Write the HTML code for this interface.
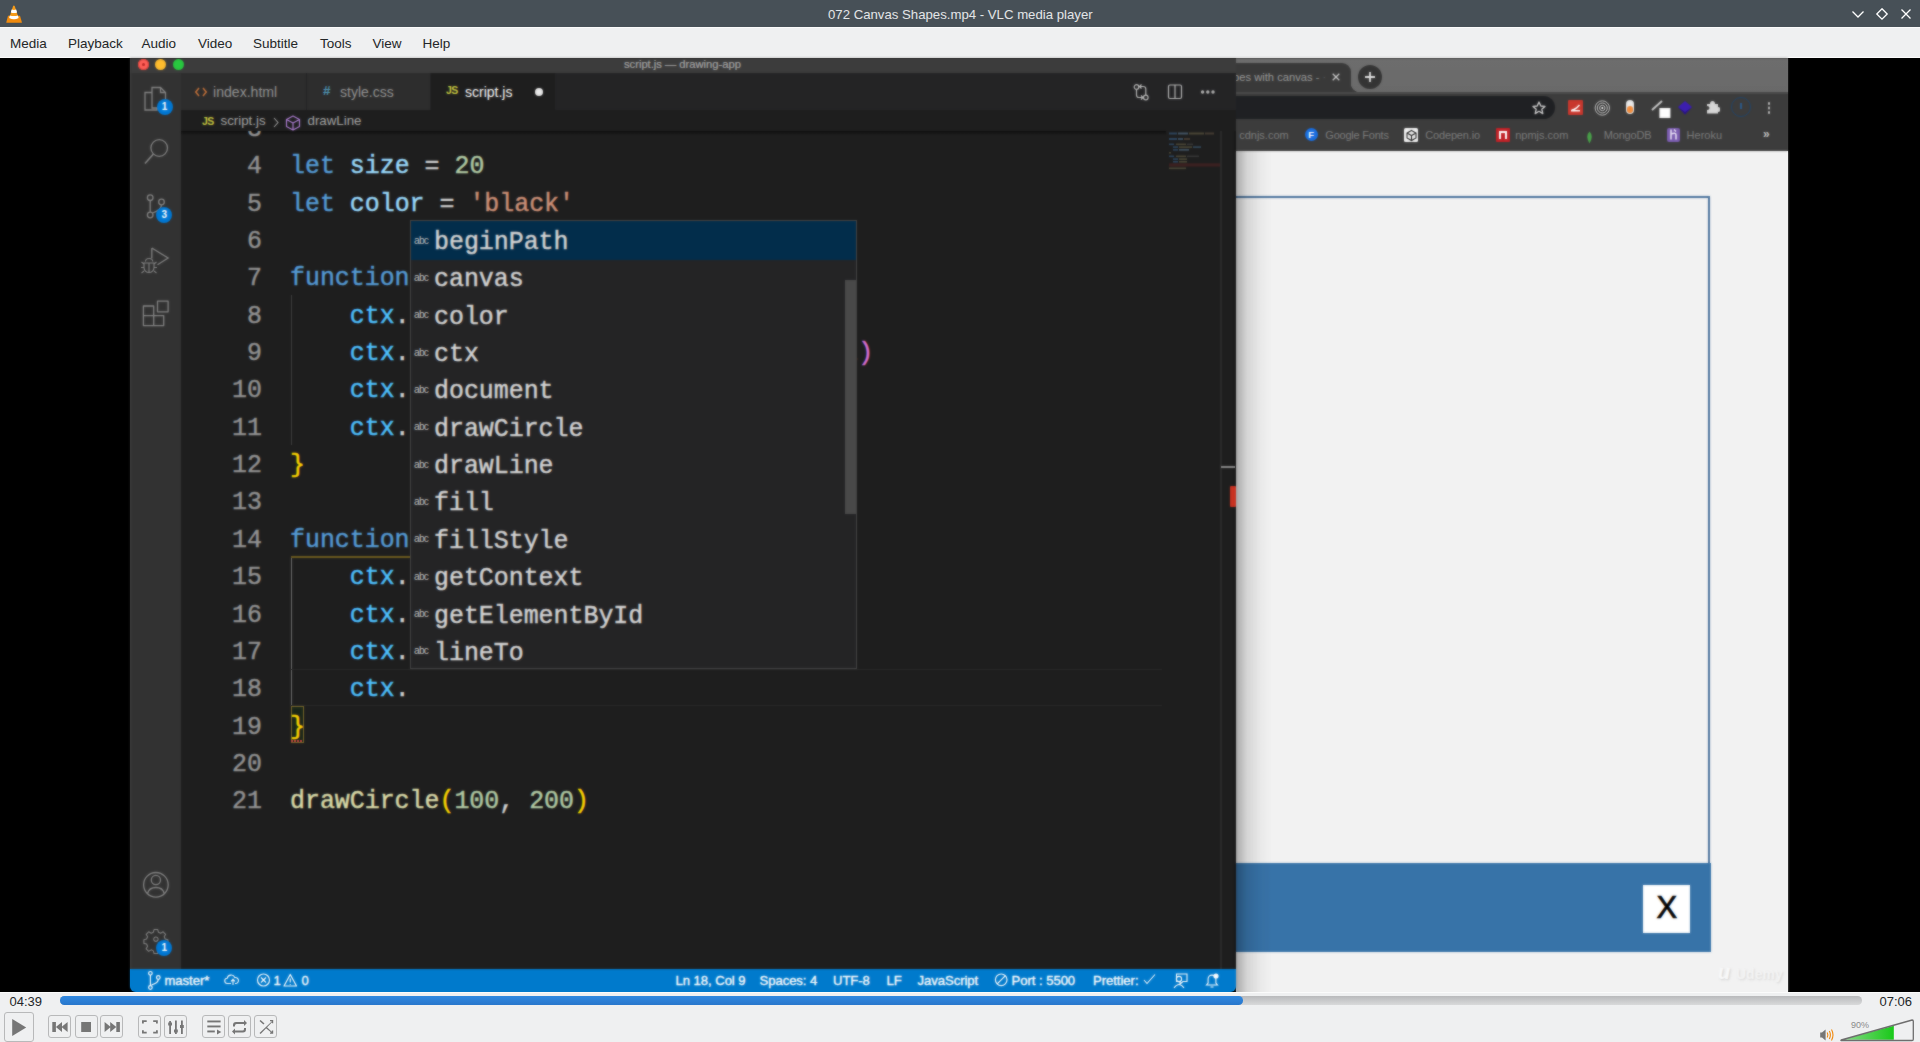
<!DOCTYPE html>
<html><head><meta charset="utf-8">
<style>
*{box-sizing:border-box;margin:0;padding:0}
html,body{width:1920px;height:1042px;overflow:hidden;background:#000;font-family:"Liberation Sans",sans-serif}
.a{position:absolute}
.t{position:absolute;white-space:pre;line-height:1}
#title{left:0;top:0;width:1920px;height:27px;background:#475057}
#tline{left:0;top:27px;width:1920px;height:1px;background:#fafafa}
#menu{left:0;top:28px;width:1920px;height:29px;background:#eff0f1}
#mline{left:0;top:57px;width:1920px;height:1px;background:#fcfcfc}
.mi{font-size:13.5px;color:#232627;top:37px}
/* vscode */
.mono{font-family:"Liberation Mono",monospace}
.code{position:absolute;left:290px;font-family:"Liberation Mono",monospace;font-size:24.92px;white-space:pre;line-height:37.35px;height:37.35px;color:#d4d4d4;transform-origin:0 28px;transform:translateY(2.7px) scaleY(1.02);-webkit-text-stroke:.45px}
.ln{position:absolute;left:190px;width:72px;text-align:right;font-family:"Liberation Mono",monospace;font-size:24.92px;white-space:pre;line-height:37.35px;height:37.35px;color:#939393;transform-origin:0 28px;transform:translateY(2.7px) scaleY(1.02);-webkit-text-stroke:.45px}
.kw{color:#569cd6}.vr{color:#9cdcfe}.cn{color:#4fc1ff}.nm{color:#b5cea8}.st{color:#ce9178}.fn{color:#dcdcaa}.b1{color:#ffd700}.b2{color:#da70d6}.b3{color:#179fff}
.sg{position:absolute;left:0;width:445px;height:37.35px}
.sgt{position:absolute;left:23px;top:0;font-family:"Liberation Mono",monospace;font-size:24.92px;white-space:pre;line-height:37.35px;color:#d4d4d4;transform-origin:0 28px;transform:translateY(2.7px) scaleY(1.02);-webkit-text-stroke:.45px}
.abc{position:absolute;left:3px;top:14.5px;font-size:10.2px;color:#c0c0c0;letter-spacing:-0.75px;line-height:1}
.ctl{position:absolute;top:1015px;width:23px;height:23px;border:1px solid #b8b9ba;border-radius:3px;background:#eff0f1}
</style></head><body>

<!-- VLC title bar -->
<div class="a" id="title">
  <svg class="a" style="left:0;top:0" width="28" height="27" viewBox="0 0 28 27">
    <path d="M8 15.8 L20 15.8 L21.9 22.2 Q22 22.7 21.4 22.7 L6.8 22.7 Q6.2 22.7 6.3 22.2 Z" fill="#f08a0e"/>
    <path d="M13.1 5.9 Q13.9 5.1 14.7 5.9 L18.7 18.2 Q14 20.6 9.1 18.2 Z" fill="#f59a18"/>
    <path d="M11.6 9.5 Q14 10.4 16.2 9.5 L17.1 12.4 Q14 13.4 10.8 12.4 Z" fill="#fdfdfd"/>
    <path d="M9.8 15.5 Q14 16.7 18 15.5 L18.6 17.9 Q14 20.6 9.2 17.9 Z" fill="#fdfdfd"/>
  </svg>
  <div class="t" style="left:828px;top:8px;font-size:13.2px;color:#e3e5e7">072 Canvas Shapes.mp4 - VLC media player</div>
  <svg class="a" style="left:1850px;top:8px" width="66" height="13" viewBox="0 0 66 13">
    <path d="M2.5 3.5 L8 9 L13.5 3.5" stroke="#fff" stroke-width="1.3" fill="none"/>
    <path d="M32 0.8 L37.2 6 L32 11.2 L26.8 6 Z" stroke="#fff" stroke-width="1.3" fill="none"/>
    <path d="M51.5 1.5 L60.5 10.5 M60.5 1.5 L51.5 10.5" stroke="#fff" stroke-width="1.3" fill="none"/>
  </svg>
</div>
<div class="a" id="tline"></div>
<div class="a" id="menu">
  <div class="t mi" style="left:10px;top:9px">Media</div>
  <div class="t mi" style="left:68px;top:9px">Playback</div>
  <div class="t mi" style="left:141.5px;top:9px">Audio</div>
  <div class="t mi" style="left:198px;top:9px">Video</div>
  <div class="t mi" style="left:253px;top:9px">Subtitle</div>
  <div class="t mi" style="left:320px;top:9px">Tools</div>
  <div class="t mi" style="left:372.5px;top:9px">View</div>
  <div class="t mi" style="left:422.5px;top:9px">Help</div>
</div>
<div class="a" id="mline"></div>

<!-- VIDEO -->
<div class="a" id="video" style="left:0;top:58px;width:1920px;height:934px;background:#000">
</div>

<div class="a" id="vframe" style="left:0;top:0;width:1920px;height:1042px">
<!--VSCODE-->
<div class="a" id="vsc" style="left:130px;top:58px;width:1106px;height:934px;background:#1e1e1e;border-radius:0 0 8px 8px;overflow:hidden">
</div>
<!-- title bar -->
<div class="a" style="left:130px;top:58px;width:1106px;height:15px;background:#3c3c3c"></div>
<div class="a" style="left:137.5px;top:59px;width:11px;height:11px;border-radius:50%;background:#fe5f57;box-shadow:inset 0 0 0 1px #e0443e"></div>
<div class="a" style="left:141.5px;top:63px;width:3px;height:3px;border-radius:50%;background:#9a0f0f;opacity:.7"></div>
<div class="a" style="left:155px;top:59px;width:11px;height:11px;border-radius:50%;background:#febc2e"></div>
<div class="a" style="left:172.5px;top:59px;width:11px;height:11px;border-radius:50%;background:#28c840"></div>
<div class="t" style="left:624px;top:59px;font-size:11.2px;color:#a8a8a8;-webkit-text-stroke:.2px #a8a8a8">script.js — drawing-app</div>
<!-- activity bar -->
<div class="a" style="left:130px;top:73px;width:50.5px;height:896px;background:#333333"></div>
<div class="a" style="left:130px;top:58px;width:2px;height:911px;background:#3a3a3a;opacity:.6"></div>
<svg class="a" style="left:130px;top:73px" width="51" height="896" viewBox="0 0 51 896" fill="none" stroke="#858585" stroke-width="1.3">
  <!-- explorer -->
  <path d="M22 14.5 h8.5 l5 5 v15.5 h-13.5 z M30.5 14.5 v5 h5"/>
  <path d="M22 19.5 h-7 v17.5 h12 v-2"/>
  <!-- search -->
  <circle cx="29.2" cy="75" r="8.3"/>
  <path d="M23.4 81 L15 90.5" stroke-width="1.6"/>
  <!-- scm -->
  <circle cx="20.2" cy="124.7" r="2.8"/>
  <circle cx="31.5" cy="129" r="2.8"/>
  <circle cx="20.2" cy="142" r="2.8"/>
  <path d="M20.2 127.5 V139.2 M31.5 131.8 Q31.5 137 22.5 140"/>
  <!-- debug -->
  <path d="M21.8 175 V185.5 M21.8 175 L38.1 185 L27.5 191.8"/>
  <path d="M15.5 188.5 a3.6 3 0 0 1 7.2 0 M14 190 h10 v4.5 a5 5 0 0 1 -10 0 z M19 190 v9 M11.5 189 l2.5 2 M26.5 189 l-2.5 2 M11 194.5 h3 M24 194.5 h3 M11.5 200 l2.5 -2 M26.5 200 l-2.5 -2" stroke-width="1.1"/>
  <!-- extensions -->
  <path d="M13.4 233 h10.3 v19.6 h-10.3 z M13.4 242.6 h20.3 v10 h-10 M27.5 228.2 h10.6 v10.6 h-10.6 z" stroke-linejoin="round"/>
  <!-- account -->
  <circle cx="25.9" cy="811.8" r="12.3"/>
  <circle cx="25.9" cy="807" r="4.6"/>
  <path d="M17.5 820.5 Q19 814.5 25.9 814.5 Q32.8 814.5 34.3 820.5"/>
  <!-- gear -->
  <g transform="translate(25.9 866.2) scale(0.84)">
    <circle r="2.6"/>
    <path d="M-2.2 -11.5 h4.4 l0.8 3.2 l2.6 1.2 l3 -1.7 l3 3 l-1.7 3 l1.2 2.6 l3.2 0.8 v4.4 l-3.2 0.8 l-1.2 2.6 l1.7 3 l-3 3 l-3 -1.7 l-2.6 1.2 l-0.8 3.2 h-4.4 l-0.8 -3.2 l-2.6 -1.2 l-3 1.7 l-3 -3 l1.7 -3 l-1.2 -2.6 l-3.2 -0.8 v-4.4 l3.2 -0.8 l1.2 -2.6 l-1.7 -3 l3 -3 l3 1.7 l2.6 -1.2 z" stroke-linejoin="round"/>
  </g>
</svg>
<!-- badges -->
<div class="a" style="left:156.6px;top:99px;width:16px;height:16px;border-radius:50%;background:#0078d4;color:#fff;font-size:10px;font-weight:bold;text-align:center;line-height:16px">1</div>
<div class="a" style="left:156.3px;top:206.5px;width:16px;height:16px;border-radius:50%;background:#0078d4;color:#fff;font-size:10px;font-weight:bold;text-align:center;line-height:16px">3</div>
<div class="a" style="left:156.2px;top:940.4px;width:16px;height:16px;border-radius:50%;background:#0078d4;color:#fff;font-size:10px;font-weight:bold;text-align:center;line-height:16px">1</div>

<!-- tab bar -->
<div class="a" style="left:180.5px;top:73px;width:1055.5px;height:37px;background:#252526"></div>
<div class="a" style="left:180.5px;top:73px;width:126px;height:37px;background:#2d2d2d;border-right:1px solid #252526"></div>
<div class="a" style="left:307px;top:73px;width:124px;height:37px;background:#2d2d2d;border-right:1px solid #252526"></div>
<div class="a" style="left:431px;top:73px;width:124px;height:37px;background:#1e1e1e"></div>
<svg class="a" style="left:194px;top:86px" width="14" height="12" viewBox="0 0 14 12"><path d="M5 2 L1.8 6 L5 10 M9 2 L12.2 6 L9 10" stroke="#c0703a" stroke-width="1.6" fill="none"/></svg>
<div class="t" style="left:213px;top:85px;font-size:14.1px;color:#969696">index.html</div>
<div class="t" style="left:323px;top:84px;font-size:13.5px;font-weight:bold;color:#519aba">#</div>
<div class="t" style="left:340px;top:85px;font-size:14px;color:#969696">style.css</div>
<div class="t" style="left:446px;top:84.5px;font-size:10.5px;font-weight:bold;color:#cbcb41;letter-spacing:-.5px">JS</div>
<div class="t" style="left:465px;top:85px;font-size:14px;color:#ffffff">script.js</div>
<div class="a" style="left:534.5px;top:87.5px;width:8px;height:8px;border-radius:50%;background:#e8e8e8"></div>
<svg class="a" style="left:1130px;top:80px" width="90" height="24" viewBox="0 0 90 24" fill="none" stroke="#b8b8b8" stroke-width="1.2">
  <circle cx="6.5" cy="7" r="2.3"/><circle cx="15.8" cy="17.5" r="2.3"/>
  <path d="M6.5 9.3 V15 Q6.5 17.5 9 17.5 H12.5 M11 15.5 l2 2 l-2 2"/>
  <path d="M15.8 15.2 V9 Q15.8 6.5 13.3 6.5 H10 M11.5 4.5 l-2 2 l2 2"/>
  <rect x="38.5" y="5" width="13" height="13.5" rx="1.5"/>
  <path d="M45 5 V18.5"/>
  <circle cx="72.6" cy="12" r="1.1" fill="#b8b8b8"/><circle cx="77.8" cy="12" r="1.1" fill="#b8b8b8"/><circle cx="83" cy="12" r="1.1" fill="#b8b8b8"/>
</svg>
<!-- breadcrumbs -->
<div class="t" style="left:202px;top:115.5px;font-size:10.5px;font-weight:bold;color:#cbcb41;letter-spacing:-.5px">JS</div>
<div class="t" style="left:220.5px;top:114px;font-size:13.3px;color:#a9a9a9">script.js</div>
<svg class="a" style="left:272px;top:115px" width="32" height="16" viewBox="0 0 32 16" fill="none">
  <path d="M2 3 L6 7.5 L2 12" stroke="#a0a0a0" stroke-width="1.1"/>
  <path d="M21 1 L27.5 4.5 V11.5 L21 15 L14.5 11.5 V4.5 Z M14.5 4.5 L21 8 L27.5 4.5 M21 8 V15" stroke="#b180d7" stroke-width="1.2" stroke-linejoin="round"/>
</svg>
<div class="t" style="left:307.5px;top:114px;font-size:13.3px;color:#a9a9a9">drawLine</div>
<!-- shadow under breadcrumbs -->
<div class="a" style="left:180.5px;top:131px;width:985px;height:4px;background:linear-gradient(#0f0f0f,rgba(30,30,30,0))"></div>
<!-- indent guides -->
<div class="a" style="left:290.5px;top:295px;width:1.3px;height:150px;background:#404040"></div>
<div class="a" style="left:290.5px;top:556.5px;width:1.5px;height:150px;background:#707070"></div>
<div class="a" style="left:290.5px;top:556px;width:125px;height:1.8px;background:#6b5a1e"></div>
<!-- current line -->
<div class="a" style="left:290px;top:668.5px;width:872px;height:37.5px;border-top:1.5px solid #2a2a2a;border-bottom:1.5px solid #2a2a2a"></div>
<!-- bracket match box line 19 -->
<div class="a" style="left:290.5px;top:706px;width:13px;height:37px;border:1px solid #7a6a2a;background:rgba(0,100,0,.12)"></div>
<div class="a" style="left:291px;top:740px;width:12px;height:2px;background:repeating-linear-gradient(90deg,#c04040 0 2px,transparent 2px 3px)"></div>
<div class="a" style="left:0;top:131px;width:1220px;height:838px;overflow:hidden"><div class="a" style="left:0;top:-131px;width:1220px;height:969px">
<div class="ln" style="top:107.95px">3</div>
<div class="ln" style="top:145.30px">4</div>
<div class="code" style="top:145.30px"><span class="kw">let</span> <span class="vr">size</span> = <span class="nm">20</span></div>
<div class="ln" style="top:182.65px">5</div>
<div class="code" style="top:182.65px"><span class="kw">let</span> <span class="vr">color</span> = <span class="st">'black'</span></div>
<div class="ln" style="top:220.00px">6</div>
<div class="ln" style="top:257.35px">7</div>
<div class="code" style="top:257.35px"><span class="kw">function</span> <span class="fn">drawCircle</span><span class="b1">(</span><span class="vr">x</span>, <span class="vr">y</span><span class="b1">)</span> <span class="b1">{</span></div>
<div class="ln" style="top:294.70px">8</div>
<div class="code" style="top:294.70px">    <span class="cn">ctx</span>.<span class="fn">beginPath</span><span class="b2">()</span></div>
<div class="ln" style="top:332.05px">9</div>
<div class="code" style="top:332.05px">    <span class="cn">ctx</span>.<span class="fn">arc</span><span class="b2">(</span><span class="vr">x</span>, <span class="vr">y</span>, <span class="vr">size</span>, <span class="nm">0</span>, <span class="cn">Math</span>.<span class="cn">PI</span> * <span class="nm">2</span><span class="b2">)</span></div>
<div class="ln" style="top:369.40px">10</div>
<div class="code" style="top:369.40px">    <span class="cn">ctx</span>.<span class="vr">fillStyle</span> = <span class="vr">color</span></div>
<div class="ln" style="top:406.75px">11</div>
<div class="code" style="top:406.75px">    <span class="cn">ctx</span>.<span class="fn">fill</span><span class="b2">()</span></div>
<div class="ln" style="top:444.10px">12</div>
<div class="code" style="top:444.10px"><span class="b1">}</span></div>
<div class="ln" style="top:481.45px">13</div>
<div class="ln" style="top:518.80px">14</div>
<div class="code" style="top:518.80px"><span class="kw">function</span> <span class="fn">drawLine</span><span class="b1">(</span><span class="vr">x1</span>, <span class="vr">y1</span>, <span class="vr">x2</span>, <span class="vr">y2</span><span class="b1">)</span> <span class="b1">{</span></div>
<div class="ln" style="top:556.15px">15</div>
<div class="code" style="top:556.15px">    <span class="cn">ctx</span>.<span class="fn">beginPath</span><span class="b2">()</span></div>
<div class="ln" style="top:593.50px">16</div>
<div class="code" style="top:593.50px">    <span class="cn">ctx</span>.<span class="fn">moveTo</span><span class="b2">(</span><span class="vr">x1</span>, <span class="vr">y1</span><span class="b2">)</span></div>
<div class="ln" style="top:630.85px">17</div>
<div class="code" style="top:630.85px">    <span class="cn">ctx</span>.<span class="fn">lineTo</span><span class="b2">(</span><span class="vr">x2</span>, <span class="vr">y2</span><span class="b2">)</span></div>
<div class="ln" style="top:668.20px">18</div>
<div class="code" style="top:668.20px">    <span class="cn">ctx</span>.</div>
<div class="ln" style="top:705.55px">19</div>
<div class="code" style="top:705.55px"><span class="b1">}</span></div>
<div class="ln" style="top:742.90px">20</div>
<div class="ln" style="top:780.25px">21</div>
<div class="code" style="top:780.25px"><span class="fn">drawCircle</span><span class="b1">(</span><span class="nm">100</span>, <span class="nm">200</span><span class="b1">)</span></div>
</div></div>
<!-- suggest widget -->
<div class="a" style="left:410px;top:220px;width:446.5px;height:449px;background:#252526;border:1px solid #454545;overflow:hidden">
<div class="a" style="left:0;top:0;width:445px;height:447px">
<div class="sg" style="top:0.00px;height:38.8px;background:#032d4b;"><div class="abc">abc</div><div class="sgt">beginPath</div></div>
<div class="sg" style="top:37.35px;"><div class="abc">abc</div><div class="sgt">canvas</div></div>
<div class="sg" style="top:74.70px;"><div class="abc">abc</div><div class="sgt">color</div></div>
<div class="sg" style="top:112.05px;"><div class="abc">abc</div><div class="sgt">ctx</div></div>
<div class="sg" style="top:149.40px;"><div class="abc">abc</div><div class="sgt">document</div></div>
<div class="sg" style="top:186.75px;"><div class="abc">abc</div><div class="sgt">drawCircle</div></div>
<div class="sg" style="top:224.10px;"><div class="abc">abc</div><div class="sgt">drawLine</div></div>
<div class="sg" style="top:261.45px;"><div class="abc">abc</div><div class="sgt">fill</div></div>
<div class="sg" style="top:298.80px;"><div class="abc">abc</div><div class="sgt">fillStyle</div></div>
<div class="sg" style="top:336.15px;"><div class="abc">abc</div><div class="sgt">getContext</div></div>
<div class="sg" style="top:373.50px;"><div class="abc">abc</div><div class="sgt">getElementById</div></div>
<div class="sg" style="top:410.85px;"><div class="abc">abc</div><div class="sgt">lineTo</div></div>
</div>
<div class="a" style="left:434px;top:59px;width:11px;height:234px;background:#4a4a4a"></div>
</div>
<!-- minimap -->
<svg class="a" style="left:1169px;top:131px" width="52" height="40" viewBox="0 0 52 40">
  <g opacity=".5">
  <rect x="0" y="1.5" width="8" height="2" fill="#3f6fa0"/><rect x="9" y="1.5" width="10" height="2" fill="#6a8fb0"/><rect x="20" y="1.5" width="15" height="2" fill="#7a7350"/><rect x="36" y="1.5" width="9" height="2" fill="#6e5a48"/>
  <rect x="0" y="7" width="8" height="2" fill="#3f6fa0"/><rect x="9" y="7" width="5" height="2" fill="#5a7fa0"/><rect x="15" y="7" width="6" height="2" fill="#6e5a48"/>
  <rect x="0" y="12.5" width="5" height="1.6" fill="#3f6fa0"/><rect x="7" y="12.5" width="10" height="1.6" fill="#7a7350"/><rect x="18" y="12.5" width="6" height="1.6" fill="#505050"/>
  <rect x="4" y="15.3" width="5" height="1.6" fill="#3f6fa0"/><rect x="10" y="15.3" width="13" height="1.6" fill="#7a7350"/><rect x="24" y="15.3" width="8" height="1.6" fill="#4a7aa0"/>
  <rect x="4" y="18.1" width="5" height="1.6" fill="#3f6fa0"/><rect x="10" y="18.1" width="10" height="1.6" fill="#6a8fb0"/>
  <rect x="0" y="21" width="2" height="1.6" fill="#7a7350"/>
  <rect x="0" y="24.5" width="5" height="1.6" fill="#3f6fa0"/><rect x="7" y="24.5" width="10" height="1.6" fill="#7a7350"/><rect x="18" y="24.5" width="12" height="1.6" fill="#505050"/>
  <rect x="4" y="27.3" width="5" height="1.6" fill="#3f6fa0"/><rect x="10" y="27.3" width="8" height="1.6" fill="#7a7350"/>
  <rect x="4" y="30" width="5" height="1.6" fill="#3f6fa0"/><rect x="10" y="30" width="8" height="1.6" fill="#7a7350"/>
  <rect x="0" y="32.3" width="52" height="3.3" fill="#5a2424"/>
  <rect x="0" y="36.5" width="17" height="1.6" fill="#7a7350"/>
  </g>
</svg>
<div class="a" style="left:1220px;top:131px;width:2px;height:838px;background:#2b2b2b"></div>
<div class="a" style="left:1222px;top:131px;width:14px;height:838px;background:#1e1e1e"></div>
<div class="a" style="left:1233.5px;top:131px;width:2.5px;height:838px;background:#181818"></div>
<div class="a" style="left:1221px;top:466px;width:14px;height:2px;background:#8a8a8a"></div>
<div class="a" style="left:1230px;top:486px;width:5.5px;height:21px;background:#c83222;border-radius:1px"></div>
<!-- status bar -->
<div class="a" style="left:130px;top:969px;width:1106px;height:22.5px;background:#007acc;border-radius:0 0 6px 6px"></div>
<svg class="a" style="left:130px;top:969px" width="1106" height="23" viewBox="0 0 1106 23" fill="none" stroke="#fff" stroke-width="1.2">
  <circle cx="20.4" cy="4.3" r="1.8"/><circle cx="20.4" cy="18.5" r="1.8"/><circle cx="28.3" cy="8.5" r="1.8"/>
  <path d="M20.4 6.1 V16.7 M28.3 10.3 Q28.3 14 21.5 16"/>
  <path d="M101 14.5 h-3.5 a2.6 2.6 0 0 1 -0.3 -5.2 a4 4 0 0 1 7.6 -0.8 a2.8 2.8 0 0 1 1.2 6 h-1 M103 16 v-5.5 M101 12.3 l2 -2 l2 2" stroke-width="1.1"/>
  <circle cx="133.5" cy="11" r="6"/><path d="M131 8.5 l5 5 M136 8.5 l-5 5"/>
  <path d="M154 17 h12.5 l-6.25 -11.5 z M160.25 9.5 v4 M160.25 15 v.8" stroke-linejoin="round"/>
  <circle cx="871.2" cy="10.8" r="5.8"/><path d="M867.2 14.8 l8 -8"/>
  <path d="M1014 11 l3 3.5 l8 -9" stroke-width="1.1"/>
  <path d="M1046.5 5 h10.5 v7.5 h-4 l-3 2.5 v-2.5 h-3.5 z" stroke-width="1.1"/>
  <circle cx="1049" cy="10" r="2.6" stroke-width="1.1"/><path d="M1044 19 q5 -7 10 0" stroke-width="1.1"/>
  <path d="M1076.5 16 h11 l-1.6 -2 v-4 a3.9 3.9 0 0 0 -7.8 0 v4 z M1080.5 18 h3" stroke-width="1.1"/>
  <circle cx="1086" cy="7" r="2.6" fill="#fff" stroke="none"/>
</svg>
<div class="t" style="left:164.5px;top:974px;font-size:13px;color:#fff;-webkit-text-stroke:.35px #fff">master*</div>
<div class="t" style="left:273.5px;top:974px;font-size:13px;color:#fff;-webkit-text-stroke:.35px #fff">1</div>
<div class="t" style="left:301.5px;top:974px;font-size:13px;color:#fff;-webkit-text-stroke:.35px #fff">0</div>
<div class="t" style="left:675.5px;top:974px;font-size:13px;color:#fff;-webkit-text-stroke:.35px #fff">Ln 18, Col 9</div>
<div class="t" style="left:759.5px;top:974px;font-size:13px;color:#fff;-webkit-text-stroke:.35px #fff">Spaces: 4</div>
<div class="t" style="left:833px;top:974px;font-size:13px;color:#fff;-webkit-text-stroke:.35px #fff">UTF-8</div>
<div class="t" style="left:886.5px;top:974px;font-size:13px;color:#fff;-webkit-text-stroke:.35px #fff">LF</div>
<div class="t" style="left:917.5px;top:974px;font-size:13px;color:#fff;-webkit-text-stroke:.35px #fff">JavaScript</div>
<div class="t" style="left:1011.5px;top:974px;font-size:13px;color:#fff;-webkit-text-stroke:.35px #fff">Port : 5500</div>
<div class="t" style="left:1093px;top:974px;font-size:13px;color:#fff;-webkit-text-stroke:.35px #fff">Prettier:</div>

<!--/VSCODE-->

<!--BROWSER-->
<div class="a" style="left:1236px;top:58px;width:551.5px;height:934px;background:#f2f2f2;overflow:hidden">
  <!-- tab strip -->
  <div class="a" style="left:0;top:0;width:552px;height:34px;background:linear-gradient(#5e5e5e 0,#6e6e6e 2px,#6a6a6a 100%)"></div>
  <div class="a" style="left:-10px;top:4.5px;width:124.5px;height:30px;background:#3a3a3a;border-radius:0 9px 0 0"></div>
  <div class="a" style="left:114px;top:25px;width:10px;height:9px;background:radial-gradient(circle at 100% 0,transparent 9px,#3a3a3a 9.5px)"></div>
  <div class="t" style="left:-3px;top:14px;font-size:11.2px;color:#9a9a9a">pes with canvas - ·</div>
  <div class="a" style="left:80px;top:12px;width:12px;height:14px;background:linear-gradient(90deg,rgba(58,58,58,0),#3a3a3a)"></div>
  <svg class="a" style="left:96px;top:14.5px" width="8" height="8" viewBox="0 0 8 8"><path d="M0.7 0.7 L7.3 7.3 M7.3 0.7 L0.7 7.3" stroke="#c8c8c8" stroke-width="1.3"/></svg>
  <div class="a" style="left:122px;top:7px;width:24px;height:24px;border-radius:50%;background:#353535"></div>
  <svg class="a" style="left:127px;top:12px" width="14" height="14" viewBox="0 0 14 14"><path d="M7 2 V12 M2 7 H12" stroke="#e0e0e0" stroke-width="1.8"/></svg>
  <!-- toolbar -->
  <div class="a" style="left:0;top:34px;width:552px;height:59px;background:#3c3c3c"></div>
  <div class="a" style="left:0;top:33.6px;width:552px;height:2px;background:#4a4a4a"></div>
  <div class="a" style="left:-20px;top:37.6px;width:338.7px;height:23.2px;border-radius:0 11.6px 11.6px 0;background:#202124"></div>
  <svg class="a" style="left:296px;top:42.5px" width="14" height="14" viewBox="0 0 14 14"><path d="M7 1 L8.8 5 L13 5.4 L9.8 8.2 L10.8 12.6 L7 10.3 L3.2 12.6 L4.2 8.2 L1 5.4 L5.2 5 Z" fill="none" stroke="#d0d0d0" stroke-width="1.3" stroke-linejoin="round"/></svg>
  <!-- extension icons -->
  <div class="a" style="left:332px;top:42.3px;width:14.8px;height:14.9px;background:#c8372d;border-radius:1px"></div>
  <svg class="a" style="left:334px;top:44px" width="11" height="11" viewBox="0 0 11 11"><path d="M1.5 8 Q5 8 9.5 3" stroke="#fff" stroke-width="1.5" fill="none"/><rect x="1" y="8" width="9" height="1.5" fill="#fff"/></svg>
  <svg class="a" style="left:357px;top:41.3px" width="18" height="18" viewBox="0 0 18 18" fill="none" stroke="#bdbdbd" stroke-width="1"><circle cx="9.3" cy="9" r="7.2"/><circle cx="9.3" cy="9" r="5"/><circle cx="9.3" cy="9" r="2.7"/><circle cx="9.3" cy="9" r="1" fill="#fff" stroke="none"/></svg>
  <div class="a" style="left:389.8px;top:42.3px;width:8.6px;height:13.3px;border-radius:4.3px;background:#e8e8e8"></div>
  <div class="a" style="left:391.2px;top:48px;width:6px;height:6.5px;border-radius:50%;background:#f28b3a"></div>
  <svg class="a" style="left:414px;top:41px" width="22" height="22" viewBox="0 0 22 22"><path d="M2 11 L12 2" stroke="#c8c8c8" stroke-width="2"/><rect x="9.4" y="9" width="11" height="10" fill="#fff"/></svg>
  <svg class="a" style="left:441px;top:41.5px" width="16" height="16" viewBox="0 0 16 16"><path d="M8 1 L15 7 L8 14.5 L1 7 Z" fill="#3c1fb0"/><path d="M1 7 L8 12 L15 7 L8 14.5 Z" fill="#2a1480"/></svg>
  <svg class="a" style="left:470px;top:42px" width="14" height="14" viewBox="0 0 14 14"><path d="M1 4 H4 Q4 1 6.5 1 Q9 1 9 4 H12 V7 Q14.5 7 14.5 9.5 Q14.5 12 12 12 V13.5 H1 V10 Q3.5 10 3.5 8 Q3.5 6 1 6 Z" fill="#d6d6d6"/></svg>
  <div class="a" style="left:494.6px;top:39.3px;width:20px;height:20px;border-radius:50%;border:1.5px solid #23466b"></div>
  <div class="a" style="left:504px;top:45px;width:1.5px;height:6px;background:#2c5a8a"></div>
  <div class="a" style="left:531.5px;top:44px;width:2.5px;height:2.5px;border-radius:50%;background:#bdbdbd;box-shadow:0 4.5px 0 #bdbdbd,0 9px 0 #bdbdbd"></div>
  <!-- bookmarks -->
  <div class="a" style="left:0;top:61px;width:552px;height:31.6px;background:#3c3c3c"></div>
  <div class="t" style="left:3.2px;top:71.5px;font-size:11px;color:#7f7f7f">cdnjs.com</div>
  <div class="a" style="left:68.5px;top:69.7px;width:13.5px;height:13.5px;border-radius:50%;background:#1a6ee0"></div>
  <div class="t" style="left:72.3px;top:71.5px;font-size:9.5px;font-weight:bold;color:#fff">F</div>
  <div class="t" style="left:89.3px;top:71.5px;font-size:11px;letter-spacing:-.22px;color:#7f7f7f">Google Fonts</div>
  <div class="a" style="left:168.4px;top:70px;width:14px;height:13.5px;background:#f4f4f4;border-radius:1.5px"></div>
  <svg class="a" style="left:169px;top:70.5px" width="13" height="13" viewBox="0 0 13 13" fill="none" stroke="#222" stroke-width="1.1"><path d="M6.5 1.5 L11 4 V9 L6.5 11.5 L2 9 V4 Z M2 4 L6.5 6.5 L11 4 M6.5 6.5 V11.5"/></svg>
  <div class="t" style="left:189.2px;top:71.5px;font-size:11px;letter-spacing:-.15px;color:#7f7f7f">Codepen.io</div>
  <div class="a" style="left:260.3px;top:70px;width:13.5px;height:13.5px;background:#c12127;border-radius:1px"></div>
  <div class="a" style="left:263px;top:73px;width:8px;height:8px;border:2px solid #fff;border-bottom:none;border-radius:0"></div>
  <div class="a" style="left:266.5px;top:75px;width:1.3px;height:6px;background:#c12127"></div>
  <div class="t" style="left:279.2px;top:71.5px;font-size:11px;color:#7f7f7f">npmjs.com</div>
  <svg class="a" style="left:349px;top:73px" width="9" height="13" viewBox="0 0 9 13"><path d="M4.5 0.5 Q9 5 4.5 12.5 Q0 5 4.5 0.5 Z" fill="#4aa14a"/></svg>
  <div class="t" style="left:367.8px;top:71.5px;font-size:11px;letter-spacing:-.2px;color:#7f7f7f">MongoDB</div>
  <div class="a" style="left:430.9px;top:69.5px;width:12.8px;height:14px;background:#7b5cb0;border-radius:2px"></div>
  <svg class="a" style="left:433px;top:71px" width="9" height="11" viewBox="0 0 9 11"><path d="M2 0.5 V10.5 M2 5 Q7 3 7 6 V10.5 M5 0.5 L7 2.5" stroke="#e8e0f4" stroke-width="1.6" fill="none"/></svg>
  <div class="t" style="left:450.6px;top:71.5px;font-size:11px;color:#7f7f7f">Heroku</div>
  <div class="t" style="left:527px;top:70px;font-size:12px;font-weight:bold;color:#c8c8c8">»</div>
  <!-- page -->
  <div class="a" style="left:0;top:93px;width:552px;height:841px;background:#f2f2f2"></div>
  <div class="a" style="left:-40px;top:137.5px;width:513.5px;height:670px;border:2px solid #4a729c;border-bottom:none"></div>
  <div class="a" style="left:-40px;top:805px;width:514.5px;height:89px;background:#3873a8"></div>
  <div class="a" style="left:407px;top:827px;width:47px;height:47.5px;background:#fff"></div>
  <div class="t" style="left:420.5px;top:834px;font-size:31px;color:#000;-webkit-text-stroke:.7px #000">X</div>
  <div class="t" style="left:482px;top:904px;font-size:20px;font-style:italic;font-weight:bold;color:#fafafa;text-shadow:1px 1px 2px rgba(0,0,0,.15)">u</div>
  <div class="t" style="left:500px;top:909px;font-size:14px;font-weight:bold;color:#f4f4f4;text-shadow:1px 1px 2px rgba(0,0,0,.12)">Udemy</div>
  <!-- left shadow -->
  <div class="a" style="left:0;top:93px;width:36px;height:841px;background:linear-gradient(90deg,rgba(0,0,0,.3),rgba(0,0,0,.12) 30%,rgba(0,0,0,.03) 70%,rgba(0,0,0,0))"></div>
</div>
<!--/BROWSER-->
</div>
<div class="a" style="left:0;top:0;width:1920px;height:1042px;filter:blur(0.8px);opacity:.6">
<!--VSCODE2-->
<div class="a" id="vsc" style="left:130px;top:58px;width:1106px;height:934px;background:#1e1e1e;border-radius:0 0 8px 8px;overflow:hidden">
</div>
<!-- title bar -->
<div class="a" style="left:130px;top:58px;width:1106px;height:15px;background:#3c3c3c"></div>
<div class="a" style="left:137.5px;top:59px;width:11px;height:11px;border-radius:50%;background:#fe5f57;box-shadow:inset 0 0 0 1px #e0443e"></div>
<div class="a" style="left:141.5px;top:63px;width:3px;height:3px;border-radius:50%;background:#9a0f0f;opacity:.7"></div>
<div class="a" style="left:155px;top:59px;width:11px;height:11px;border-radius:50%;background:#febc2e"></div>
<div class="a" style="left:172.5px;top:59px;width:11px;height:11px;border-radius:50%;background:#28c840"></div>
<div class="t" style="left:624px;top:59px;font-size:11.2px;color:#a8a8a8;-webkit-text-stroke:.2px #a8a8a8">script.js — drawing-app</div>
<!-- activity bar -->
<div class="a" style="left:130px;top:73px;width:50.5px;height:896px;background:#333333"></div>
<div class="a" style="left:130px;top:58px;width:2px;height:911px;background:#3a3a3a;opacity:.6"></div>
<svg class="a" style="left:130px;top:73px" width="51" height="896" viewBox="0 0 51 896" fill="none" stroke="#858585" stroke-width="1.3">
  <!-- explorer -->
  <path d="M22 14.5 h8.5 l5 5 v15.5 h-13.5 z M30.5 14.5 v5 h5"/>
  <path d="M22 19.5 h-7 v17.5 h12 v-2"/>
  <!-- search -->
  <circle cx="29.2" cy="75" r="8.3"/>
  <path d="M23.4 81 L15 90.5" stroke-width="1.6"/>
  <!-- scm -->
  <circle cx="20.2" cy="124.7" r="2.8"/>
  <circle cx="31.5" cy="129" r="2.8"/>
  <circle cx="20.2" cy="142" r="2.8"/>
  <path d="M20.2 127.5 V139.2 M31.5 131.8 Q31.5 137 22.5 140"/>
  <!-- debug -->
  <path d="M21.8 175 V185.5 M21.8 175 L38.1 185 L27.5 191.8"/>
  <path d="M15.5 188.5 a3.6 3 0 0 1 7.2 0 M14 190 h10 v4.5 a5 5 0 0 1 -10 0 z M19 190 v9 M11.5 189 l2.5 2 M26.5 189 l-2.5 2 M11 194.5 h3 M24 194.5 h3 M11.5 200 l2.5 -2 M26.5 200 l-2.5 -2" stroke-width="1.1"/>
  <!-- extensions -->
  <path d="M13.4 233 h10.3 v19.6 h-10.3 z M13.4 242.6 h20.3 v10 h-10 M27.5 228.2 h10.6 v10.6 h-10.6 z" stroke-linejoin="round"/>
  <!-- account -->
  <circle cx="25.9" cy="811.8" r="12.3"/>
  <circle cx="25.9" cy="807" r="4.6"/>
  <path d="M17.5 820.5 Q19 814.5 25.9 814.5 Q32.8 814.5 34.3 820.5"/>
  <!-- gear -->
  <g transform="translate(25.9 866.2) scale(0.84)">
    <circle r="2.6"/>
    <path d="M-2.2 -11.5 h4.4 l0.8 3.2 l2.6 1.2 l3 -1.7 l3 3 l-1.7 3 l1.2 2.6 l3.2 0.8 v4.4 l-3.2 0.8 l-1.2 2.6 l1.7 3 l-3 3 l-3 -1.7 l-2.6 1.2 l-0.8 3.2 h-4.4 l-0.8 -3.2 l-2.6 -1.2 l-3 1.7 l-3 -3 l1.7 -3 l-1.2 -2.6 l-3.2 -0.8 v-4.4 l3.2 -0.8 l1.2 -2.6 l-1.7 -3 l3 -3 l3 1.7 l2.6 -1.2 z" stroke-linejoin="round"/>
  </g>
</svg>
<!-- badges -->
<div class="a" style="left:156.6px;top:99px;width:16px;height:16px;border-radius:50%;background:#0078d4;color:#fff;font-size:10px;font-weight:bold;text-align:center;line-height:16px">1</div>
<div class="a" style="left:156.3px;top:206.5px;width:16px;height:16px;border-radius:50%;background:#0078d4;color:#fff;font-size:10px;font-weight:bold;text-align:center;line-height:16px">3</div>
<div class="a" style="left:156.2px;top:940.4px;width:16px;height:16px;border-radius:50%;background:#0078d4;color:#fff;font-size:10px;font-weight:bold;text-align:center;line-height:16px">1</div>

<!-- tab bar -->
<div class="a" style="left:180.5px;top:73px;width:1055.5px;height:37px;background:#252526"></div>
<div class="a" style="left:180.5px;top:73px;width:126px;height:37px;background:#2d2d2d;border-right:1px solid #252526"></div>
<div class="a" style="left:307px;top:73px;width:124px;height:37px;background:#2d2d2d;border-right:1px solid #252526"></div>
<div class="a" style="left:431px;top:73px;width:124px;height:37px;background:#1e1e1e"></div>
<svg class="a" style="left:194px;top:86px" width="14" height="12" viewBox="0 0 14 12"><path d="M5 2 L1.8 6 L5 10 M9 2 L12.2 6 L9 10" stroke="#c0703a" stroke-width="1.6" fill="none"/></svg>
<div class="t" style="left:213px;top:85px;font-size:14.1px;color:#969696">index.html</div>
<div class="t" style="left:323px;top:84px;font-size:13.5px;font-weight:bold;color:#519aba">#</div>
<div class="t" style="left:340px;top:85px;font-size:14px;color:#969696">style.css</div>
<div class="t" style="left:446px;top:84.5px;font-size:10.5px;font-weight:bold;color:#cbcb41;letter-spacing:-.5px">JS</div>
<div class="t" style="left:465px;top:85px;font-size:14px;color:#ffffff">script.js</div>
<div class="a" style="left:534.5px;top:87.5px;width:8px;height:8px;border-radius:50%;background:#e8e8e8"></div>
<svg class="a" style="left:1130px;top:80px" width="90" height="24" viewBox="0 0 90 24" fill="none" stroke="#b8b8b8" stroke-width="1.2">
  <circle cx="6.5" cy="7" r="2.3"/><circle cx="15.8" cy="17.5" r="2.3"/>
  <path d="M6.5 9.3 V15 Q6.5 17.5 9 17.5 H12.5 M11 15.5 l2 2 l-2 2"/>
  <path d="M15.8 15.2 V9 Q15.8 6.5 13.3 6.5 H10 M11.5 4.5 l-2 2 l2 2"/>
  <rect x="38.5" y="5" width="13" height="13.5" rx="1.5"/>
  <path d="M45 5 V18.5"/>
  <circle cx="72.6" cy="12" r="1.1" fill="#b8b8b8"/><circle cx="77.8" cy="12" r="1.1" fill="#b8b8b8"/><circle cx="83" cy="12" r="1.1" fill="#b8b8b8"/>
</svg>
<!-- breadcrumbs -->
<div class="t" style="left:202px;top:115.5px;font-size:10.5px;font-weight:bold;color:#cbcb41;letter-spacing:-.5px">JS</div>
<div class="t" style="left:220.5px;top:114px;font-size:13.3px;color:#a9a9a9">script.js</div>
<svg class="a" style="left:272px;top:115px" width="32" height="16" viewBox="0 0 32 16" fill="none">
  <path d="M2 3 L6 7.5 L2 12" stroke="#a0a0a0" stroke-width="1.1"/>
  <path d="M21 1 L27.5 4.5 V11.5 L21 15 L14.5 11.5 V4.5 Z M14.5 4.5 L21 8 L27.5 4.5 M21 8 V15" stroke="#b180d7" stroke-width="1.2" stroke-linejoin="round"/>
</svg>
<div class="t" style="left:307.5px;top:114px;font-size:13.3px;color:#a9a9a9">drawLine</div>
<!-- shadow under breadcrumbs -->
<div class="a" style="left:180.5px;top:131px;width:985px;height:4px;background:linear-gradient(#0f0f0f,rgba(30,30,30,0))"></div>
<!-- indent guides -->
<div class="a" style="left:290.5px;top:295px;width:1.3px;height:150px;background:#404040"></div>
<div class="a" style="left:290.5px;top:556.5px;width:1.5px;height:150px;background:#707070"></div>
<div class="a" style="left:290.5px;top:556px;width:125px;height:1.8px;background:#6b5a1e"></div>
<!-- current line -->
<div class="a" style="left:290px;top:668.5px;width:872px;height:37.5px;border-top:1.5px solid #2a2a2a;border-bottom:1.5px solid #2a2a2a"></div>
<!-- bracket match box line 19 -->
<div class="a" style="left:290.5px;top:706px;width:13px;height:37px;border:1px solid #7a6a2a;background:rgba(0,100,0,.12)"></div>
<div class="a" style="left:291px;top:740px;width:12px;height:2px;background:repeating-linear-gradient(90deg,#c04040 0 2px,transparent 2px 3px)"></div>
<div class="a" style="left:0;top:131px;width:1220px;height:838px;overflow:hidden"><div class="a" style="left:0;top:-131px;width:1220px;height:969px">
<div class="ln" style="top:107.95px">3</div>
<div class="ln" style="top:145.30px">4</div>
<div class="code" style="top:145.30px"><span class="kw">let</span> <span class="vr">size</span> = <span class="nm">20</span></div>
<div class="ln" style="top:182.65px">5</div>
<div class="code" style="top:182.65px"><span class="kw">let</span> <span class="vr">color</span> = <span class="st">'black'</span></div>
<div class="ln" style="top:220.00px">6</div>
<div class="ln" style="top:257.35px">7</div>
<div class="code" style="top:257.35px"><span class="kw">function</span> <span class="fn">drawCircle</span><span class="b1">(</span><span class="vr">x</span>, <span class="vr">y</span><span class="b1">)</span> <span class="b1">{</span></div>
<div class="ln" style="top:294.70px">8</div>
<div class="code" style="top:294.70px">    <span class="cn">ctx</span>.<span class="fn">beginPath</span><span class="b2">()</span></div>
<div class="ln" style="top:332.05px">9</div>
<div class="code" style="top:332.05px">    <span class="cn">ctx</span>.<span class="fn">arc</span><span class="b2">(</span><span class="vr">x</span>, <span class="vr">y</span>, <span class="vr">size</span>, <span class="nm">0</span>, <span class="cn">Math</span>.<span class="cn">PI</span> * <span class="nm">2</span><span class="b2">)</span></div>
<div class="ln" style="top:369.40px">10</div>
<div class="code" style="top:369.40px">    <span class="cn">ctx</span>.<span class="vr">fillStyle</span> = <span class="vr">color</span></div>
<div class="ln" style="top:406.75px">11</div>
<div class="code" style="top:406.75px">    <span class="cn">ctx</span>.<span class="fn">fill</span><span class="b2">()</span></div>
<div class="ln" style="top:444.10px">12</div>
<div class="code" style="top:444.10px"><span class="b1">}</span></div>
<div class="ln" style="top:481.45px">13</div>
<div class="ln" style="top:518.80px">14</div>
<div class="code" style="top:518.80px"><span class="kw">function</span> <span class="fn">drawLine</span><span class="b1">(</span><span class="vr">x1</span>, <span class="vr">y1</span>, <span class="vr">x2</span>, <span class="vr">y2</span><span class="b1">)</span> <span class="b1">{</span></div>
<div class="ln" style="top:556.15px">15</div>
<div class="code" style="top:556.15px">    <span class="cn">ctx</span>.<span class="fn">beginPath</span><span class="b2">()</span></div>
<div class="ln" style="top:593.50px">16</div>
<div class="code" style="top:593.50px">    <span class="cn">ctx</span>.<span class="fn">moveTo</span><span class="b2">(</span><span class="vr">x1</span>, <span class="vr">y1</span><span class="b2">)</span></div>
<div class="ln" style="top:630.85px">17</div>
<div class="code" style="top:630.85px">    <span class="cn">ctx</span>.<span class="fn">lineTo</span><span class="b2">(</span><span class="vr">x2</span>, <span class="vr">y2</span><span class="b2">)</span></div>
<div class="ln" style="top:668.20px">18</div>
<div class="code" style="top:668.20px">    <span class="cn">ctx</span>.</div>
<div class="ln" style="top:705.55px">19</div>
<div class="code" style="top:705.55px"><span class="b1">}</span></div>
<div class="ln" style="top:742.90px">20</div>
<div class="ln" style="top:780.25px">21</div>
<div class="code" style="top:780.25px"><span class="fn">drawCircle</span><span class="b1">(</span><span class="nm">100</span>, <span class="nm">200</span><span class="b1">)</span></div>
</div></div>
<!-- suggest widget -->
<div class="a" style="left:410px;top:220px;width:446.5px;height:449px;background:#252526;border:1px solid #454545;overflow:hidden">
<div class="a" style="left:0;top:0;width:445px;height:447px">
<div class="sg" style="top:0.00px;height:38.8px;background:#032d4b;"><div class="abc">abc</div><div class="sgt">beginPath</div></div>
<div class="sg" style="top:37.35px;"><div class="abc">abc</div><div class="sgt">canvas</div></div>
<div class="sg" style="top:74.70px;"><div class="abc">abc</div><div class="sgt">color</div></div>
<div class="sg" style="top:112.05px;"><div class="abc">abc</div><div class="sgt">ctx</div></div>
<div class="sg" style="top:149.40px;"><div class="abc">abc</div><div class="sgt">document</div></div>
<div class="sg" style="top:186.75px;"><div class="abc">abc</div><div class="sgt">drawCircle</div></div>
<div class="sg" style="top:224.10px;"><div class="abc">abc</div><div class="sgt">drawLine</div></div>
<div class="sg" style="top:261.45px;"><div class="abc">abc</div><div class="sgt">fill</div></div>
<div class="sg" style="top:298.80px;"><div class="abc">abc</div><div class="sgt">fillStyle</div></div>
<div class="sg" style="top:336.15px;"><div class="abc">abc</div><div class="sgt">getContext</div></div>
<div class="sg" style="top:373.50px;"><div class="abc">abc</div><div class="sgt">getElementById</div></div>
<div class="sg" style="top:410.85px;"><div class="abc">abc</div><div class="sgt">lineTo</div></div>
</div>
<div class="a" style="left:434px;top:59px;width:11px;height:234px;background:#4a4a4a"></div>
</div>
<!-- minimap -->
<svg class="a" style="left:1169px;top:131px" width="52" height="40" viewBox="0 0 52 40">
  <g opacity=".5">
  <rect x="0" y="1.5" width="8" height="2" fill="#3f6fa0"/><rect x="9" y="1.5" width="10" height="2" fill="#6a8fb0"/><rect x="20" y="1.5" width="15" height="2" fill="#7a7350"/><rect x="36" y="1.5" width="9" height="2" fill="#6e5a48"/>
  <rect x="0" y="7" width="8" height="2" fill="#3f6fa0"/><rect x="9" y="7" width="5" height="2" fill="#5a7fa0"/><rect x="15" y="7" width="6" height="2" fill="#6e5a48"/>
  <rect x="0" y="12.5" width="5" height="1.6" fill="#3f6fa0"/><rect x="7" y="12.5" width="10" height="1.6" fill="#7a7350"/><rect x="18" y="12.5" width="6" height="1.6" fill="#505050"/>
  <rect x="4" y="15.3" width="5" height="1.6" fill="#3f6fa0"/><rect x="10" y="15.3" width="13" height="1.6" fill="#7a7350"/><rect x="24" y="15.3" width="8" height="1.6" fill="#4a7aa0"/>
  <rect x="4" y="18.1" width="5" height="1.6" fill="#3f6fa0"/><rect x="10" y="18.1" width="10" height="1.6" fill="#6a8fb0"/>
  <rect x="0" y="21" width="2" height="1.6" fill="#7a7350"/>
  <rect x="0" y="24.5" width="5" height="1.6" fill="#3f6fa0"/><rect x="7" y="24.5" width="10" height="1.6" fill="#7a7350"/><rect x="18" y="24.5" width="12" height="1.6" fill="#505050"/>
  <rect x="4" y="27.3" width="5" height="1.6" fill="#3f6fa0"/><rect x="10" y="27.3" width="8" height="1.6" fill="#7a7350"/>
  <rect x="4" y="30" width="5" height="1.6" fill="#3f6fa0"/><rect x="10" y="30" width="8" height="1.6" fill="#7a7350"/>
  <rect x="0" y="32.3" width="52" height="3.3" fill="#5a2424"/>
  <rect x="0" y="36.5" width="17" height="1.6" fill="#7a7350"/>
  </g>
</svg>
<div class="a" style="left:1220px;top:131px;width:2px;height:838px;background:#2b2b2b"></div>
<div class="a" style="left:1222px;top:131px;width:14px;height:838px;background:#1e1e1e"></div>
<div class="a" style="left:1233.5px;top:131px;width:2.5px;height:838px;background:#181818"></div>
<div class="a" style="left:1221px;top:466px;width:14px;height:2px;background:#8a8a8a"></div>
<div class="a" style="left:1230px;top:486px;width:5.5px;height:21px;background:#c83222;border-radius:1px"></div>
<!-- status bar -->
<div class="a" style="left:130px;top:969px;width:1106px;height:22.5px;background:#007acc;border-radius:0 0 6px 6px"></div>
<svg class="a" style="left:130px;top:969px" width="1106" height="23" viewBox="0 0 1106 23" fill="none" stroke="#fff" stroke-width="1.2">
  <circle cx="20.4" cy="4.3" r="1.8"/><circle cx="20.4" cy="18.5" r="1.8"/><circle cx="28.3" cy="8.5" r="1.8"/>
  <path d="M20.4 6.1 V16.7 M28.3 10.3 Q28.3 14 21.5 16"/>
  <path d="M101 14.5 h-3.5 a2.6 2.6 0 0 1 -0.3 -5.2 a4 4 0 0 1 7.6 -0.8 a2.8 2.8 0 0 1 1.2 6 h-1 M103 16 v-5.5 M101 12.3 l2 -2 l2 2" stroke-width="1.1"/>
  <circle cx="133.5" cy="11" r="6"/><path d="M131 8.5 l5 5 M136 8.5 l-5 5"/>
  <path d="M154 17 h12.5 l-6.25 -11.5 z M160.25 9.5 v4 M160.25 15 v.8" stroke-linejoin="round"/>
  <circle cx="871.2" cy="10.8" r="5.8"/><path d="M867.2 14.8 l8 -8"/>
  <path d="M1014 11 l3 3.5 l8 -9" stroke-width="1.1"/>
  <path d="M1046.5 5 h10.5 v7.5 h-4 l-3 2.5 v-2.5 h-3.5 z" stroke-width="1.1"/>
  <circle cx="1049" cy="10" r="2.6" stroke-width="1.1"/><path d="M1044 19 q5 -7 10 0" stroke-width="1.1"/>
  <path d="M1076.5 16 h11 l-1.6 -2 v-4 a3.9 3.9 0 0 0 -7.8 0 v4 z M1080.5 18 h3" stroke-width="1.1"/>
  <circle cx="1086" cy="7" r="2.6" fill="#fff" stroke="none"/>
</svg>
<div class="t" style="left:164.5px;top:974px;font-size:13px;color:#fff;-webkit-text-stroke:.35px #fff">master*</div>
<div class="t" style="left:273.5px;top:974px;font-size:13px;color:#fff;-webkit-text-stroke:.35px #fff">1</div>
<div class="t" style="left:301.5px;top:974px;font-size:13px;color:#fff;-webkit-text-stroke:.35px #fff">0</div>
<div class="t" style="left:675.5px;top:974px;font-size:13px;color:#fff;-webkit-text-stroke:.35px #fff">Ln 18, Col 9</div>
<div class="t" style="left:759.5px;top:974px;font-size:13px;color:#fff;-webkit-text-stroke:.35px #fff">Spaces: 4</div>
<div class="t" style="left:833px;top:974px;font-size:13px;color:#fff;-webkit-text-stroke:.35px #fff">UTF-8</div>
<div class="t" style="left:886.5px;top:974px;font-size:13px;color:#fff;-webkit-text-stroke:.35px #fff">LF</div>
<div class="t" style="left:917.5px;top:974px;font-size:13px;color:#fff;-webkit-text-stroke:.35px #fff">JavaScript</div>
<div class="t" style="left:1011.5px;top:974px;font-size:13px;color:#fff;-webkit-text-stroke:.35px #fff">Port : 5500</div>
<div class="t" style="left:1093px;top:974px;font-size:13px;color:#fff;-webkit-text-stroke:.35px #fff">Prettier:</div>

<!--/VSCODE2-->

<!--BROWSER2-->
<div class="a" style="left:1236px;top:58px;width:551.5px;height:934px;background:#f2f2f2;overflow:hidden">
  <!-- tab strip -->
  <div class="a" style="left:0;top:0;width:552px;height:34px;background:linear-gradient(#5e5e5e 0,#6e6e6e 2px,#6a6a6a 100%)"></div>
  <div class="a" style="left:-10px;top:4.5px;width:124.5px;height:30px;background:#3a3a3a;border-radius:0 9px 0 0"></div>
  <div class="a" style="left:114px;top:25px;width:10px;height:9px;background:radial-gradient(circle at 100% 0,transparent 9px,#3a3a3a 9.5px)"></div>
  <div class="t" style="left:-3px;top:14px;font-size:11.2px;color:#9a9a9a">pes with canvas - ·</div>
  <div class="a" style="left:80px;top:12px;width:12px;height:14px;background:linear-gradient(90deg,rgba(58,58,58,0),#3a3a3a)"></div>
  <svg class="a" style="left:96px;top:14.5px" width="8" height="8" viewBox="0 0 8 8"><path d="M0.7 0.7 L7.3 7.3 M7.3 0.7 L0.7 7.3" stroke="#c8c8c8" stroke-width="1.3"/></svg>
  <div class="a" style="left:122px;top:7px;width:24px;height:24px;border-radius:50%;background:#353535"></div>
  <svg class="a" style="left:127px;top:12px" width="14" height="14" viewBox="0 0 14 14"><path d="M7 2 V12 M2 7 H12" stroke="#e0e0e0" stroke-width="1.8"/></svg>
  <!-- toolbar -->
  <div class="a" style="left:0;top:34px;width:552px;height:59px;background:#3c3c3c"></div>
  <div class="a" style="left:0;top:33.6px;width:552px;height:2px;background:#4a4a4a"></div>
  <div class="a" style="left:-20px;top:37.6px;width:338.7px;height:23.2px;border-radius:0 11.6px 11.6px 0;background:#202124"></div>
  <svg class="a" style="left:296px;top:42.5px" width="14" height="14" viewBox="0 0 14 14"><path d="M7 1 L8.8 5 L13 5.4 L9.8 8.2 L10.8 12.6 L7 10.3 L3.2 12.6 L4.2 8.2 L1 5.4 L5.2 5 Z" fill="none" stroke="#d0d0d0" stroke-width="1.3" stroke-linejoin="round"/></svg>
  <!-- extension icons -->
  <div class="a" style="left:332px;top:42.3px;width:14.8px;height:14.9px;background:#c8372d;border-radius:1px"></div>
  <svg class="a" style="left:334px;top:44px" width="11" height="11" viewBox="0 0 11 11"><path d="M1.5 8 Q5 8 9.5 3" stroke="#fff" stroke-width="1.5" fill="none"/><rect x="1" y="8" width="9" height="1.5" fill="#fff"/></svg>
  <svg class="a" style="left:357px;top:41.3px" width="18" height="18" viewBox="0 0 18 18" fill="none" stroke="#bdbdbd" stroke-width="1"><circle cx="9.3" cy="9" r="7.2"/><circle cx="9.3" cy="9" r="5"/><circle cx="9.3" cy="9" r="2.7"/><circle cx="9.3" cy="9" r="1" fill="#fff" stroke="none"/></svg>
  <div class="a" style="left:389.8px;top:42.3px;width:8.6px;height:13.3px;border-radius:4.3px;background:#e8e8e8"></div>
  <div class="a" style="left:391.2px;top:48px;width:6px;height:6.5px;border-radius:50%;background:#f28b3a"></div>
  <svg class="a" style="left:414px;top:41px" width="22" height="22" viewBox="0 0 22 22"><path d="M2 11 L12 2" stroke="#c8c8c8" stroke-width="2"/><rect x="9.4" y="9" width="11" height="10" fill="#fff"/></svg>
  <svg class="a" style="left:441px;top:41.5px" width="16" height="16" viewBox="0 0 16 16"><path d="M8 1 L15 7 L8 14.5 L1 7 Z" fill="#3c1fb0"/><path d="M1 7 L8 12 L15 7 L8 14.5 Z" fill="#2a1480"/></svg>
  <svg class="a" style="left:470px;top:42px" width="14" height="14" viewBox="0 0 14 14"><path d="M1 4 H4 Q4 1 6.5 1 Q9 1 9 4 H12 V7 Q14.5 7 14.5 9.5 Q14.5 12 12 12 V13.5 H1 V10 Q3.5 10 3.5 8 Q3.5 6 1 6 Z" fill="#d6d6d6"/></svg>
  <div class="a" style="left:494.6px;top:39.3px;width:20px;height:20px;border-radius:50%;border:1.5px solid #23466b"></div>
  <div class="a" style="left:504px;top:45px;width:1.5px;height:6px;background:#2c5a8a"></div>
  <div class="a" style="left:531.5px;top:44px;width:2.5px;height:2.5px;border-radius:50%;background:#bdbdbd;box-shadow:0 4.5px 0 #bdbdbd,0 9px 0 #bdbdbd"></div>
  <!-- bookmarks -->
  <div class="a" style="left:0;top:61px;width:552px;height:31.6px;background:#3c3c3c"></div>
  <div class="t" style="left:3.2px;top:71.5px;font-size:11px;color:#7f7f7f">cdnjs.com</div>
  <div class="a" style="left:68.5px;top:69.7px;width:13.5px;height:13.5px;border-radius:50%;background:#1a6ee0"></div>
  <div class="t" style="left:72.3px;top:71.5px;font-size:9.5px;font-weight:bold;color:#fff">F</div>
  <div class="t" style="left:89.3px;top:71.5px;font-size:11px;letter-spacing:-.22px;color:#7f7f7f">Google Fonts</div>
  <div class="a" style="left:168.4px;top:70px;width:14px;height:13.5px;background:#f4f4f4;border-radius:1.5px"></div>
  <svg class="a" style="left:169px;top:70.5px" width="13" height="13" viewBox="0 0 13 13" fill="none" stroke="#222" stroke-width="1.1"><path d="M6.5 1.5 L11 4 V9 L6.5 11.5 L2 9 V4 Z M2 4 L6.5 6.5 L11 4 M6.5 6.5 V11.5"/></svg>
  <div class="t" style="left:189.2px;top:71.5px;font-size:11px;letter-spacing:-.15px;color:#7f7f7f">Codepen.io</div>
  <div class="a" style="left:260.3px;top:70px;width:13.5px;height:13.5px;background:#c12127;border-radius:1px"></div>
  <div class="a" style="left:263px;top:73px;width:8px;height:8px;border:2px solid #fff;border-bottom:none;border-radius:0"></div>
  <div class="a" style="left:266.5px;top:75px;width:1.3px;height:6px;background:#c12127"></div>
  <div class="t" style="left:279.2px;top:71.5px;font-size:11px;color:#7f7f7f">npmjs.com</div>
  <svg class="a" style="left:349px;top:73px" width="9" height="13" viewBox="0 0 9 13"><path d="M4.5 0.5 Q9 5 4.5 12.5 Q0 5 4.5 0.5 Z" fill="#4aa14a"/></svg>
  <div class="t" style="left:367.8px;top:71.5px;font-size:11px;letter-spacing:-.2px;color:#7f7f7f">MongoDB</div>
  <div class="a" style="left:430.9px;top:69.5px;width:12.8px;height:14px;background:#7b5cb0;border-radius:2px"></div>
  <svg class="a" style="left:433px;top:71px" width="9" height="11" viewBox="0 0 9 11"><path d="M2 0.5 V10.5 M2 5 Q7 3 7 6 V10.5 M5 0.5 L7 2.5" stroke="#e8e0f4" stroke-width="1.6" fill="none"/></svg>
  <div class="t" style="left:450.6px;top:71.5px;font-size:11px;color:#7f7f7f">Heroku</div>
  <div class="t" style="left:527px;top:70px;font-size:12px;font-weight:bold;color:#c8c8c8">»</div>
  <!-- page -->
  <div class="a" style="left:0;top:93px;width:552px;height:841px;background:#f2f2f2"></div>
  <div class="a" style="left:-40px;top:137.5px;width:513.5px;height:670px;border:2px solid #4a729c;border-bottom:none"></div>
  <div class="a" style="left:-40px;top:805px;width:514.5px;height:89px;background:#3873a8"></div>
  <div class="a" style="left:407px;top:827px;width:47px;height:47.5px;background:#fff"></div>
  <div class="t" style="left:420.5px;top:834px;font-size:31px;color:#000;-webkit-text-stroke:.7px #000">X</div>
  <div class="t" style="left:482px;top:904px;font-size:20px;font-style:italic;font-weight:bold;color:#fafafa;text-shadow:1px 1px 2px rgba(0,0,0,.15)">u</div>
  <div class="t" style="left:500px;top:909px;font-size:14px;font-weight:bold;color:#f4f4f4;text-shadow:1px 1px 2px rgba(0,0,0,.12)">Udemy</div>
  <!-- left shadow -->
  <div class="a" style="left:0;top:93px;width:36px;height:841px;background:linear-gradient(90deg,rgba(0,0,0,.3),rgba(0,0,0,.12) 30%,rgba(0,0,0,.03) 70%,rgba(0,0,0,0))"></div>
</div>
<!--/BROWSER2-->
</div>


<!--CONTROLS-->
<div class="a" style="left:0;top:992px;width:1920px;height:50px;background:#eff0f1"></div>
<div class="a" style="left:0;top:992px;width:1920px;height:1px;background:#fbfbfb"></div>
<div class="t" style="left:9.5px;top:995px;font-size:13px;color:#232627">04:39</div>
<div class="t" style="left:1879.5px;top:995.3px;font-size:13px;color:#232627">07:06</div>
<div class="a" style="left:59.8px;top:996.3px;width:1802px;height:8.7px;border-radius:4.3px;background:linear-gradient(#b9babc,#d8d9da)"></div>
<div class="a" style="left:59.8px;top:996.3px;width:1183.4px;height:8.7px;border-radius:4.3px;background:linear-gradient(#3088e0,#2877cc)"></div>
<!-- buttons -->
<div class="ctl" style="left:4.3px;top:1012.3px;width:29.4px;height:30px;border-radius:3px"></div>
<svg class="a" style="left:12px;top:1018.5px" width="15" height="17" viewBox="0 0 15 17"><path d="M0.2 0 L14.2 8.5 L0.2 17 Z" fill="#767676"/></svg>
<div class="ctl" style="left:48.4px"></div>
<div class="ctl" style="left:74.6px"></div>
<div class="ctl" style="left:100.4px"></div>
<div class="ctl" style="left:138.3px"></div>
<div class="ctl" style="left:164.3px"></div>
<div class="ctl" style="left:202.3px"></div>
<div class="ctl" style="left:228.3px"></div>
<div class="ctl" style="left:254.3px"></div>
<svg class="a" style="left:0;top:1012px" width="300" height="30" viewBox="0 1012 300 30" fill="#767676">
  <!-- prev -->
  <rect x="52.3" y="1022" width="3.6" height="10"/>
  <path d="M55.9 1027 L62 1022 V1032 Z M61.5 1027 L67.6 1022 V1032 Z"/>
  <!-- stop -->
  <rect x="81.2" y="1022" width="9.8" height="10"/>
  <!-- next -->
  <path d="M104.6 1022 L110.7 1027 L104.6 1032 Z M110.2 1022 L116.3 1027 L110.2 1032 Z"/>
  <rect x="116.3" y="1022" width="3.6" height="10"/>
  <!-- fullscreen -->
  <path d="M142 1020.3 H146.7 V1022 H143.8 V1023.6 H142 Z M157.8 1020.3 H153.2 V1022 H156 V1023.6 H157.8 Z M142 1033.6 H146.7 V1031.8 H143.8 V1030.2 H142 Z M157.8 1033.6 H153.2 V1031.8 H156 V1030.2 H157.8 Z"/>
  <!-- ext settings -->
  <rect x="169.2" y="1021" width="1.8" height="13"/><rect x="175" y="1020.5" width="1.8" height="13.5"/><rect x="181" y="1020.5" width="1.8" height="13.5"/>
  <rect x="168.2" y="1022.5" width="3.8" height="3"/><rect x="174" y="1029.5" width="3.8" height="3"/><rect x="180" y="1025" width="3.8" height="3"/>
  <!-- playlist -->
  <rect x="207.3" y="1020.5" width="13.3" height="1.9"/><rect x="207.3" y="1025.5" width="13.3" height="1.9"/><rect x="207.3" y="1030.5" width="7.5" height="1.9"/>
  <path d="M217 1029.5 L221.3 1032 L217 1034.5 Z"/>
  <!-- loop -->
  <path d="M233 1026.5 V1025 Q233 1022 236 1022 H244 V1020 L247 1023 L244 1026 V1024 H236.5 Q235 1024 235 1025.5 V1026.5 Z M246 1028 V1029.5 Q246 1032.5 243 1032.5 H235 V1034.5 L232 1031.5 L235 1028.5 V1030.5 H242.5 Q244 1030.5 244 1029 V1028 Z"/>
  <!-- random -->
  <path d="M259.5 1021 L260.6 1020 L264.5 1023.6 L263.4 1024.6 Z M259.5 1033 L272 1021.2 L270 1021.2 V1020 H273.2 V1023.3 H272 V1022.2 L260.6 1034 Z M266 1028.2 L267 1027.2 L271.8 1031.7 V1030.5 H273.2 V1033.8 H270 V1032.6 H271.2 Z"/>
</svg>
<!-- volume -->
<svg class="a" style="left:1815px;top:1015px" width="105" height="27" viewBox="1815 1015 105 27">
  <path d="M1820.2 1032.5 H1822 L1825.6 1029.5 V1040.5 L1822 1037.5 H1820.2 Z" fill="#767676"/>
  <path d="M1827.2 1032.5 Q1828.6 1035 1827.2 1037.5 M1829.3 1031 Q1831.5 1035 1829.3 1039 M1831.5 1029.6 Q1834.5 1035 1831.5 1040.4" stroke="#f08a10" stroke-width="1.1" fill="none"/>
  <defs><linearGradient id="vg" x1="0" x2="1" y1="0" y2="0"><stop offset="0" stop-color="#8ad98a"/><stop offset="1" stop-color="#19c919"/></linearGradient></defs>
  <path d="M1842 1039.8 L1893.8 1025.8 V1039.8 Z" fill="url(#vg)"/>
  <path d="M1841.2 1040 L1912.2 1020 Q1913.3 1020 1913.3 1021.2 V1039.2 Q1913.3 1040.5 1912 1040.5 H1842 Q1840.3 1040.5 1841.2 1040 Z" fill="none" stroke="#6e6e6e" stroke-width="1.3" stroke-linejoin="round"/>
</svg>
<div class="t" style="left:1851px;top:1020.5px;font-size:9px;color:#8a8a8a">90%</div>
<!--/CONTROLS-->

</body></html>
